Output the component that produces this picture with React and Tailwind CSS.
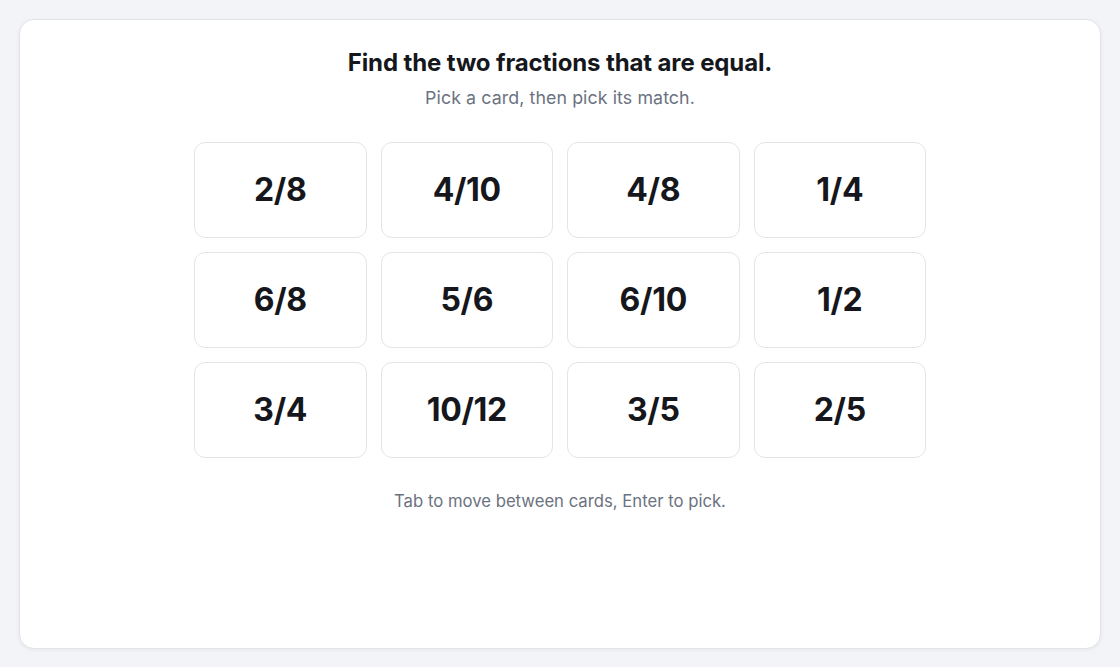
const CARDS = ['2/8', '4/10', '4/8', '1/4', '6/8', '5/6', '6/10', '1/2', '3/4', '10/12', '3/5', '2/5'];

function FractionCard({ value }) {
  return (
    <button
      type="button"
      className="h-[96px] rounded-[11px] border border-[#e3e5e9] bg-white text-[32px] font-bold text-[#15171c] tracking-[-0.01em] flex items-center justify-center"
    >
      {value}
    </button>
  );
}

export default function App() {
  return (
    <div
      className="h-[667px] bg-[#f3f4f7] p-[19px] pb-[18px]"
      style={{ fontFamily: 'Inter, "Noto Sans", sans-serif' }}
    >
      <div className="h-full rounded-[15px] border border-[#e2e4e8] bg-white shadow-[0_1px_4px_rgba(15,23,42,0.06)] flex flex-col items-center pt-[27px]">
        <h1 className="text-[24px] leading-[32px] font-bold text-[#15171c] tracking-[-0.005em]">
          Find the two fractions that are equal.
        </h1>
        <p className="mt-[7px] text-[17.8px] leading-[24px] text-[#6b7280] tracking-[0.005em]">Pick a card, then pick its match.</p>

        <div className="mt-[32px] w-[732px] grid grid-cols-4 gap-x-[14px] gap-y-[14px]">
          {CARDS.map((c) => (
            <FractionCard key={c} value={c} />
          ))}
        </div>

        <p className="mt-[33px] text-[16.7px] leading-[20px] text-[#6b7280]">Tab to move between cards, Enter to pick.</p>
      </div>
    </div>
  );
}
